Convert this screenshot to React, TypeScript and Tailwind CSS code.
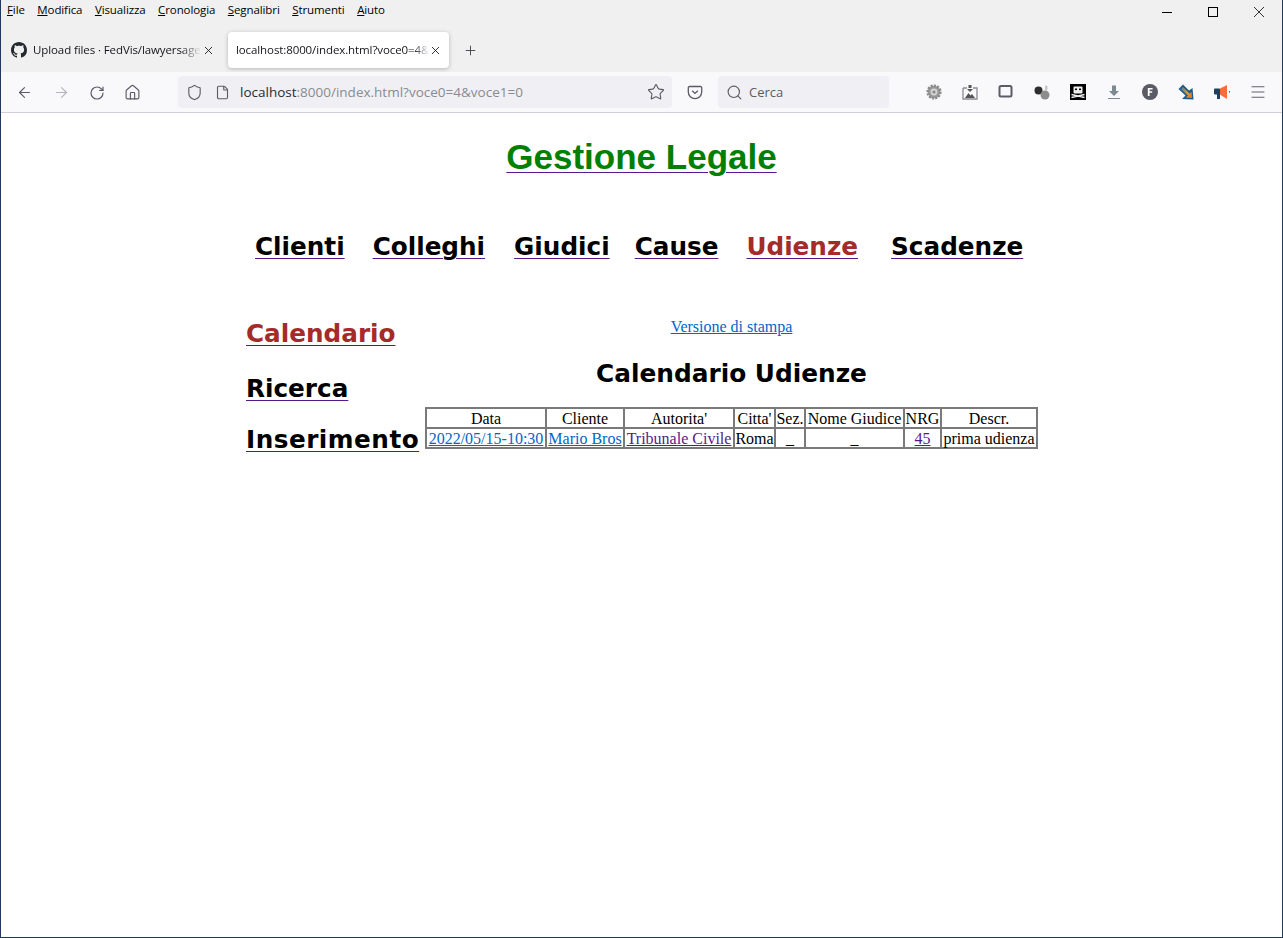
import { ArrowLeft, ArrowRight, RotateCw, House, Shield, File, Star, Search, X, Plus, Menu } from "lucide-react";

const menuItems: [string, string][] = [
  ["F", "ile"],
  ["M", "odifica"],
  ["V", "isualizza"],
  ["C", "ronologia"],
  ["S", "egnalibri"],
  ["S", "trumenti"],
  ["A", "iuto"],
];

function WindowControls() {
  return (
    <div className="flex items-center pt-[7px]">
      <div className="flex w-[46px] justify-center">
        <svg viewBox="0 0 10 10" className="h-[10px] w-[10px]" stroke="#000" strokeWidth="1" fill="none">
          <path d="M0 5.5h10" />
        </svg>
      </div>
      <div className="flex w-[46px] justify-center">
        <svg viewBox="0 0 10 10" className="h-[10px] w-[10px]" stroke="#000" strokeWidth="1" fill="none">
          <rect x="0.5" y="0.5" width="9" height="9" />
        </svg>
      </div>
      <div className="flex w-[46px] justify-center">
        <svg viewBox="0 0 10 10" className="h-[10px] w-[10px]" stroke="#000" strokeWidth="0.8" fill="none">
          <path d="M0 0l10 10M10 0L0 10" />
        </svg>
      </div>
    </div>
  );
}

function MenuBar() {
  return (
    <div className="flex h-6 items-start justify-between bg-[#f0f0f0]">
      <div className="flex gap-[12.5px] pl-[6px] pt-[2px] text-[11.5px] leading-[16px] tracking-[-0.1px] text-black">
        {menuItems.map(([key, rest]) => (
          <span key={key + rest}>
            <span className="underline">{key}</span>
            {rest}
          </span>
        ))}
      </div>
      <WindowControls />
    </div>
  );
}

function GithubMark() {
  return (
    <svg viewBox="0 0 16 16" className="h-4 w-4 shrink-0" fill="#24292f">
      <path d="M8 0C3.58 0 0 3.58 0 8c0 3.54 2.29 6.53 5.47 7.59.4.07.55-.17.55-.38 0-.19-.01-.82-.01-1.49-2.01.37-2.53-.49-2.69-.94-.09-.23-.48-.94-.82-1.13-.28-.15-.68-.52-.01-.53.63-.01 1.08.58 1.23.82.72 1.21 1.87.87 2.33.66.07-.52.28-.87.51-1.07-1.78-.2-3.64-.89-3.64-3.95 0-.87.31-1.59.82-2.15-.08-.2-.36-1.02.08-2.12 0 0 .67-.21 2.2.82.64-.18 1.32-.27 2-.27s1.36.09 2 .27c1.53-1.04 2.2-.82 2.2-.82.44 1.1.16 1.92.08 2.12.51.56.82 1.27.82 2.15 0 3.07-1.87 3.75-3.65 3.95.29.25.54.73.54 1.48 0 1.07-.01 1.93-.01 2.2 0 .21.15.46.55.38A8.01 8.01 0 0 0 16 8c0-4.42-3.58-8-8-8z" />
    </svg>
  );
}

function TabStrip() {
  return (
    <div className="flex h-12 items-start bg-[#f0f0f0] pt-[8px]">
      <div className="flex h-[36px] w-[227px] items-center pl-[10px] pr-[13px] text-[11.5px] tracking-[-0.1px] text-[#15141a]">
        <GithubMark />
        <span className="ml-[6px] whitespace-nowrap [mask-image:linear-gradient(to_right,black_88%,transparent)]">
          Upload files · FedVis/lawyersage
        </span>
        <X size={13} strokeWidth={1.6} className="ml-auto shrink-0" />
      </div>
      <div className="flex h-[36px] w-[221px] items-center rounded-[4px] bg-white pl-[8px] pr-[12px] text-[11.5px] tracking-[-0.1px] text-[#15141a] shadow-[0_1px_4px_rgba(0,0,0,0.25)]">
        <span className="whitespace-nowrap [mask-image:linear-gradient(to_right,black_92%,transparent)]">
          localhost:8000/index.html?voce0=4&
        </span>
        <X size={13} strokeWidth={1.6} className="ml-auto shrink-0" />
      </div>
      <div className="ml-[14px] flex h-[36px] items-center text-[#3a3a3f]">
        <Plus size={15} strokeWidth={1.4} />
      </div>
    </div>
  );
}

function ExtensionIcons() {
  return (
    <div className="flex items-center gap-[20px]">
      <svg viewBox="0 0 16 16" className="h-4 w-4">
        <circle cx="8" cy="8" r="6.3" fill="#9a9a9a" stroke="#8a8a8a" strokeWidth="2.6" strokeDasharray="2 1.2" />
        <circle cx="8" cy="8" r="3.4" fill="#d4d4d4" />
        <circle cx="8" cy="8" r="1.6" fill="#8a8a8a" />
      </svg>
      <svg viewBox="0 0 16 16" className="h-4 w-4">
        <path d="M1 4h4M11 4h4v11H1V4" fill="none" stroke="#8a8a94" strokeWidth="1.3" />
        <path d="M3 14l3.5-5 2 2.5 1.5-1.5 3 4z" fill="#555" />
        <path d="M6.5 4h3V1h-3zM5 5l3 3 3-3z" fill="#555" />
      </svg>
      <svg viewBox="0 0 16 16" className="h-4 w-4">
        <rect x="1.5" y="2" width="12" height="10.5" rx="1.5" fill="none" stroke="#5c5c66" strokeWidth="2" />
      </svg>
      <svg viewBox="0 0 16 16" className="h-4 w-4">
        <circle cx="4.5" cy="6.5" r="4" fill="#2e2e2e" />
        <circle cx="11" cy="11" r="4.5" fill="#8c8c8c" />
        <rect x="11" y="1.5" width="2.4" height="5" rx="1" fill="#c4c4c4" />
      </svg>
      <svg viewBox="0 0 16 16" className="h-4 w-4">
        <rect width="16" height="16" fill="#000" />
        <rect x="3.5" y="2.5" width="9" height="7" rx="1" fill="#eee" />
        <rect x="5" y="4.5" width="2" height="1.6" fill="#000" />
        <rect x="9" y="4.5" width="2" height="1.6" fill="#000" />
        <path d="M1.5 10.5l13 3M14.5 10.5l-13 3" stroke="#eee" strokeWidth="1.3" />
      </svg>
      <svg viewBox="0 0 16 16" className="h-4 w-4">
        <path d="M6 1.5h4v5.5h3l-5 5-5-5h3z" fill="#7b8a8f" />
        <rect x="2" y="14" width="12" height="1" fill="#7b8a8f" />
      </svg>
      <svg viewBox="0 0 16 16" className="h-4 w-4">
        <circle cx="8" cy="8" r="8" fill="#5b5b66" />
        <path d="M5.8 12V4h4.8v1.5H7.6v1.8h2.6v1.5H7.6V12z" fill="#fff" />
      </svg>
      <svg viewBox="0 0 16 16" className="h-4 w-4">
        <defs>
          <linearGradient id="arrowFill" x1="0" y1="0" x2="1" y2="1">
            <stop offset="0" stopColor="#4a7fa0" />
            <stop offset="0.55" stopColor="#d9a02c" />
            <stop offset="1" stopColor="#f26b1d" />
          </linearGradient>
        </defs>
        <path d="M0.5 5L5 0.5l6 6 3.5-2.5 1 11.500L4 15l3.500-3.500z" fill="#1e5a8a" />
        <path d="M3 5l2-2 6.500 6.500 2-1.500.5 6-6-.5 2-2z" fill="url(#arrowFill)" />
      </svg>
      <svg viewBox="0 0 16 16" className="h-4 w-4">
        <path d="M5 5l8-4v14L5 10z" fill="#ff6a3c" />
        <rect x="0" y="4.500" width="6" height="6" rx="1" fill="#1d3f5e" />
        <rect x="3" y="10" width="3" height="5" fill="#1d3f5e" />
        <rect x="15" y="7" width="1" height="1.500" fill="#555" />
      </svg>
    </div>
  );
}

function Toolbar() {
  return (
    <div className="flex h-[41px] items-center border-b border-[#cfcfd8] bg-[#f9f9fb] text-[#5b5b66]">
      <div className="flex w-[177px] items-center pl-[15px] pt-[1px]">
        <ArrowLeft size={17} strokeWidth={1.6} />
        <ArrowRight size={17} strokeWidth={1.6} className="ml-[20px] text-[#b4b4ba]" />
        <RotateCw size={16} strokeWidth={1.8} className="ml-[19px]" />
        <House size={17} strokeWidth={1.6} className="ml-[19px]" />
      </div>
      <div className="flex h-8 w-[494px] items-center rounded-[4px] bg-[#f0f0f4] pl-[8px] pr-[7px]">
        <Shield size={17} strokeWidth={1.6} />
        <File size={15} strokeWidth={1.8} className="ml-[12px]" />
        <span className="ml-[10px] pt-[1px] text-[13.5px] text-[#8a8a90]">
          <span className="text-[#2b2a33]">localhost</span>:8000/index.html?voce0=4&voce1=0
        </span>
        <Star size={18} strokeWidth={1.5} className="ml-auto" />
      </div>
      <svg viewBox="0 0 16 16" className="ml-[15px] h-4 w-4" fill="none" stroke="#5b5b66" strokeWidth="1.3">
        <path d="M2.500 2.500h11a1.200 1.200 0 0 1 1.200 1.200V8a6.700 6.700 0 0 1-13.400 0V3.700a1.200 1.200 0 0 1 1.200-1.200z" />
        <path d="M5.200 6.700L8 9.400l2.800-2.700" />
      </svg>
      <div className="ml-[15px] flex h-8 w-[171px] items-center rounded-[4px] bg-[#f0f0f4] pl-[8px] text-[13px] text-[#5b5b66]">
        <Search size={17} strokeWidth={1.6} />
        <span className="ml-[6px] pt-[2px]">Cerca</span>
      </div>
      <div className="ml-[37px]">
        <ExtensionIcons />
      </div>
      <Menu size={18} strokeWidth={1.3} className="ml-[19px]" />
    </div>
  );
}

const linkClass = "underline decoration-[#551a8b] decoration-[1px] underline-offset-[3px]";

function TopNav() {
  return (
    <div className="mt-[54px] flex pl-[254px] font-['DejaVu_Sans'] text-[24.7px] font-bold leading-[30px] text-black">
      <a className={linkClass}>Clienti</a>
      <a className={`ml-[28px] ${linkClass}`}>Colleghi</a>
      <a className={`ml-[29px] ${linkClass}`}>Giudici</a>
      <a className={`ml-[25px] ${linkClass}`}>Cause</a>
      <a className={`ml-[28px] text-[#a52a2a] ${linkClass}`}>Udienze</a>
      <a className={`ml-[33px] ${linkClass}`}>Scadenze</a>
    </div>
  );
}

function Sidebar() {
  return (
    <div className="mt-[1px] flex w-[179px] flex-col font-['DejaVu_Sans'] text-[24.7px] font-bold leading-[30px] text-black">
      <a className={`self-start text-[#a52a2a] ${linkClass}`}>Calendario</a>
      <a className={`mt-[25px] self-start ${linkClass}`}>Ricerca</a>
      <a className={`mt-[21px] self-start tracking-[0.5px] ${linkClass}`}>Inserimento</a>
    </div>
  );
}

const headers = ["Data", "Cliente", "Autorita'", "Citta'", "Sez.", "Nome Giudice", "NRG", "Descr."];
const cellClass = "border-2 border-[#7a7a7a] p-0 pt-[1px] text-center leading-[17px] whitespace-nowrap";

function HearingsTable() {
  return (
    <table className="w-[611px] table-fixed border-collapse border-2 border-[#7a7a7a] font-['Liberation_Serif'] text-[16px] text-black">
      <colgroup>
        <col className="w-[120px]" />
        <col className="w-[78px]" />
        <col className="w-[110px]" />
        <col className="w-[41px]" />
        <col className="w-[30px]" />
        <col className="w-[99px]" />
        <col className="w-[37px]" />
        <col className="w-[96px]" />
      </colgroup>
      <tbody>
        <tr>
          {headers.map((h) => (
            <td key={h} className={cellClass}>{h}</td>
          ))}
        </tr>
        <tr>
          <td className={cellClass}><a className="text-[#0066cc] underline">2022/05/15-10:30</a></td>
          <td className={cellClass}><a className="text-[#0066cc] underline">Mario Bros</a></td>
          <td className={cellClass}><a className="text-[#551a8b] underline">Tribunale Civile</a></td>
          <td className={cellClass}>Roma</td>
          <td className={cellClass}>_</td>
          <td className={cellClass}>_</td>
          <td className={cellClass}><a className="text-[#551a8b] underline">45</a></td>
          <td className={cellClass}>prima udienza</td>
        </tr>
      </tbody>
    </table>
  );
}

export default function App() {
  return (
    <div className="flex h-[938px] w-[1283px] flex-col overflow-hidden border-x border-b border-x-[#1f3a5f] border-b-[#1f3a5f] bg-white font-['Open_Sans',sans-serif]">
      <MenuBar />
      <TabStrip />
      <Toolbar />
      <h1 className="mt-[23px] text-center font-['Liberation_Sans'] text-[35px] font-bold leading-[42px] text-[#008000]">
        <a className={linkClass}>Gestione Legale</a>
      </h1>
      <TopNav />
      <div className="mt-[56px] flex pl-[245px]">
        <Sidebar />
        <div className="flex flex-col items-center">
          <a className="font-['Liberation_Serif'] text-[16px] leading-[18px] text-[#0066cc] underline">Versione di stampa</a>
          <h2 className="mt-[24px] font-['DejaVu_Sans'] text-[24.8px] font-bold leading-[28px] text-black">Calendario Udienze</h2>
          <div className="mt-[19px]">
            <HearingsTable />
          </div>
        </div>
      </div>
    </div>
  );
}
